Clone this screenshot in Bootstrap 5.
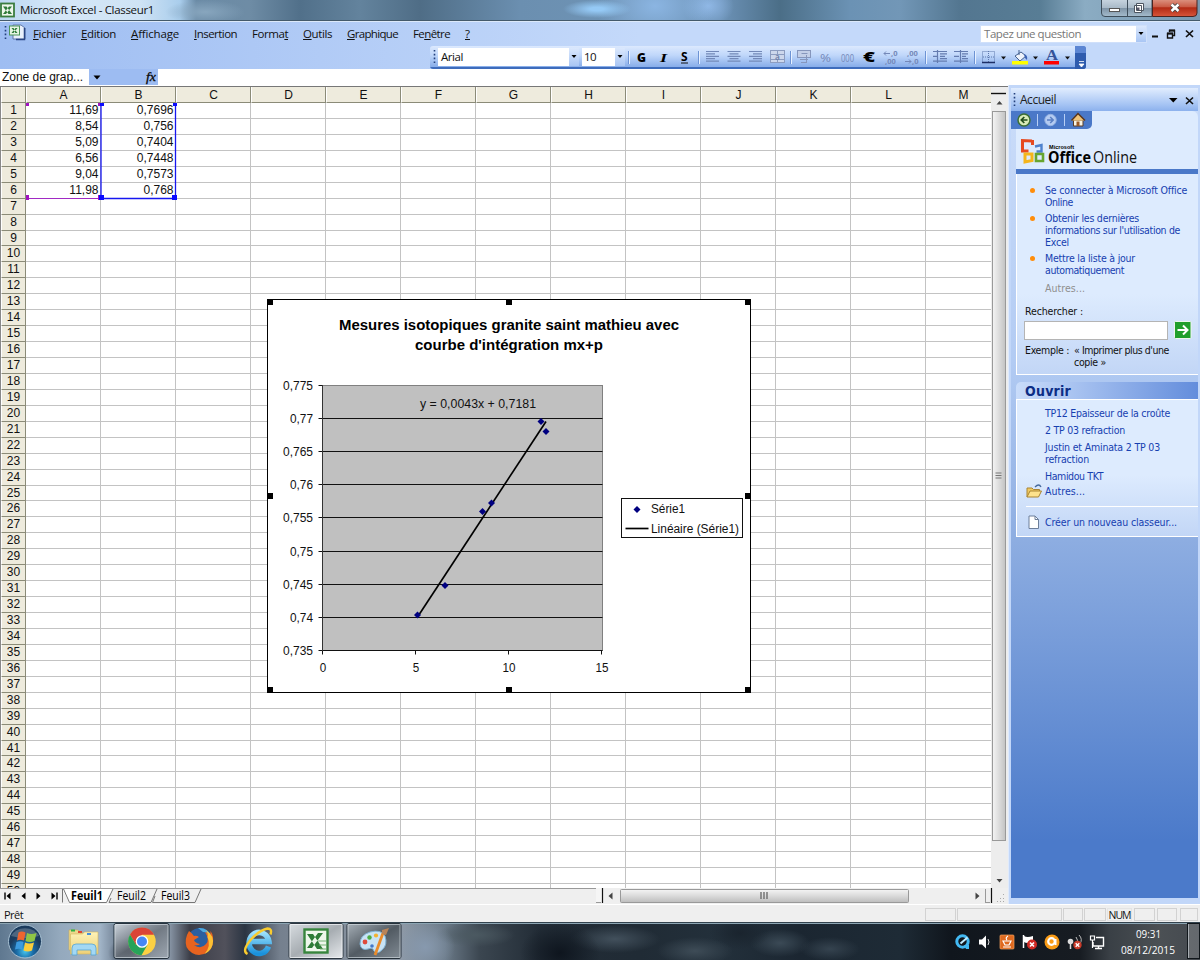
<!DOCTYPE html>
<html lang="fr">
<head>
<meta charset="utf-8">
<title>Microsoft Excel - Classeur1</title>
<link href="https://cdn.jsdelivr.net/npm/bootstrap@5.3.0/dist/css/bootstrap.min.css" rel="stylesheet">
<style>
body{width:1200px;height:960px;overflow:hidden;background:#efefef;color:#111;font:11.5px/14px "Open Sans","Noto Sans",sans-serif}
svg{display:block;flex:none}
svg text{white-space:pre}
.titlebar{height:21px;background:
 radial-gradient(ellipse 34px 9px at 597px 9px,#95c9f5 20%,transparent),
 radial-gradient(ellipse 60px 40px at 655px 6px,#8bb5e2,transparent),
 radial-gradient(ellipse 40px 12px at 205px 12px,#88a6be,transparent),
 radial-gradient(ellipse 26px 20px at 708px 6px,#90b8e6,transparent),
 linear-gradient(90deg,#bcd8f1 0,#d5e7f7 60px,#cfe3f5 140px,#a9cdec 180px,#6b8ba6 196px,#6e8ca5 250px,#51708a 300px,#63839d 360px,#4f6d86 420px,#6b8fb0 520px,#6f94b6 640px,#6d93b8 720px,#4b6e87 780px,#6b92b4 850px,#7297b7 900px,#537690 960px,#587d95 1040px,#8bacc3 1085px,#7898b0 1200px);
 border-bottom:1px solid #445a6b}
.menubar{height:25px;border-top:1px solid #dce9fa;background:linear-gradient(90deg,#9ebdf2,#c4d9fa 640px)}
.menubar u{text-underline-offset:1px}
.menubar .mi{margin-right:15px}
.menubar>span{position:static;padding-bottom:1px}
.ask{width:167px;height:18px;border:1px solid #d0e0fa;color:#777;margin-right:5px}
.dropcell{width:10px;background:linear-gradient(#dbe8fd,#a9c6f4)}
.toolrow{height:23px;background:linear-gradient(90deg,#9ebdf2,#c4d9fa 640px)}
.toolbox{width:656px;margin-left:430px;border-radius:3px;background:linear-gradient(#dce9fe,#c0d7fa 40%,#86ace9 92%,#3e6cbc 93%)}
.combo{height:18px;margin-top:2px}
.formula{height:16px;background:#9dbcf2;font:12px/16px "Liberation Sans",sans-serif}
.namebox{width:89px}
.bookarea{width:1008px;padding-top:1px;background:#fff}
.work{height:802px;border-top:1px solid #777}
.sheet{width:991px;border-left:1px solid #888;font:12px/15px "Liberation Sans",sans-serif}
.hrow{height:16px;line-height:17px}
.drow{height:15.946px}
.rh{width:25px;flex:none;text-align:center;background:#eeebdd;border-right:1px solid #8b8b78;border-bottom:1px solid #8b8b78;border-left:1px solid #fff}
.ch{width:75px;flex:none;text-align:center;background:#eeebdd;border-right:1px solid #8b8b78;border-bottom:1px solid #8b8b78;border-left:1px solid #fff}
.cell{width:75px;flex:none;text-align:right;padding-right:1.5px;border-right:1px solid #c3c3c3;border-bottom:1px solid #c3c3c3}
.range{left:25px;top:15px}
.chart{left:266px;top:212px;font-family:"Liberation Sans",sans-serif}
.pane{width:192px;height:819px;background:#c2d7f9;padding:3px 2px 6px 2px;font:10.5px/12px "DejaVu Sans Condensed","DejaVu Sans",sans-serif;color:#1640b0;border-left:1px solid #dfeafc}
.panehead{height:23px;background:linear-gradient(#e1edfe,#a7c5f4 70%,#8cb1ed);color:#222}
.panebody{height:787px;background:linear-gradient(#cadcf9,#b2cbf3 250px,#8dade1 430px,#4b7aca 730px)}
.navtab{width:81px;height:18px;background:#4a78c8;border-radius:0 0 5px 0}
.navrow{height:18px;background:#ddebfe;border-radius:0 6px 0 0}
.office{height:40px;margin-left:5px;background:#ddebfe}
.bluebar{height:5px;margin-left:5px;background:#4a78c8}
.card1{height:201px;margin-left:5px;background:linear-gradient(#ddebfe 60%,#c2d6f6);border-left:1px solid #fff;border-bottom:1px solid #fff;padding:10px 0 0 7px}
.bul{display:flex}
.bul::before{content:"";width:5px;height:5px;border-radius:50%;background:#ff8d0a;margin:4px 10px 0 6px;flex:none}
.search{width:144px;height:19px;background:#fff;border:1px solid #b4b4b4}
.openhead{height:17px;margin:7px 0 0 5px;border-radius:5px 0 0 0;background:linear-gradient(90deg,#c9dcfa,#638ddc);color:#0c2d85;font:bold 14px/18px "DejaVu Sans Condensed",sans-serif;padding-left:9px}
.card2{height:138px;margin-left:5px;background:linear-gradient(#ddebfe 55%,#c2d6f6);border:solid #fff;border-width:1px 0 1px 1px;padding:7px 0 0 9px}
.card2 .ln{padding-left:19px;margin-bottom:5px}
.newfile{margin-top:7px;height:30px;border-top:1px solid #fff}
.status{height:18px;border-top:1px solid #fff;padding-top:3px}
.pcell{height:13px;border:1px solid #d2d2d2;line-height:12px;font-size:10.5px;text-align:center;flex:none;margin-left:1px}
.taskbar{height:38px;border-top:1px solid #33434e;box-shadow:inset 0 1px #8ca5b3;background:
 radial-gradient(ellipse 30px 26px at 425px 24px,#8799ae,transparent),
 radial-gradient(ellipse 40px 12px at 475px 12px,#4b5961,transparent),
 radial-gradient(ellipse 40px 30px at 560px 30px,#0e151e,transparent),
 radial-gradient(ellipse 45px 14px at 615px 16px,#42505c,transparent),
 radial-gradient(ellipse 38px 14px at 695px 28px,#3e4c57,transparent),
 radial-gradient(ellipse 30px 16px at 740px 10px,#1a242e,transparent),
 radial-gradient(ellipse 30px 14px at 780px 20px,#3b4a56,transparent),
 radial-gradient(ellipse 30px 12px at 830px 26px,#35434f,transparent),
 radial-gradient(ellipse 22px 16px at 130px 30px,#2d3846,transparent),
 linear-gradient(90deg,#5f7890,#94a9bd 60px,#a1b4c7 100px,#6f7f92 118px,#8693a3 170px,#3b3d47 190px,#51515b 225px,#2b3543 245px,#75808e 280px,#8f9aa7 400px,#6b7a88 445px,#3b4650 480px,#222c36 540px,#202b35 640px,#23303b 720px,#1b2631 800px,#1e2b36 900px,#10161d 950px,#171c22 1080px,#3a4046 1110px,#4b5054 1160px,#454a50)}
</style>
</head>
<body>
<header>
 <div class="titlebar d-flex justify-content-between">
  <div class="d-flex align-items-center">
   <svg width="20" height="20" viewBox="0 0 20 20"><rect x="1" y="3.500" width="13" height="13" fill="#eef7ec" stroke="#3b7d3f" stroke-width="1.800"/><path d="M3 6.500h3.500l5.500 7.500H8.500zM12 6.500H9L3 14h3z" fill="#2f7b38"/></svg>
   <span data-w="134">Microsoft Excel - Classeur1</span>
  </div>
  <svg width="100" height="19" viewBox="1100 0 100 19">
   <defs><linearGradient id="gb" x2="0" y2="1"><stop offset="0" stop-color="#c9d6e1"/><stop offset=".5" stop-color="#a9bac8"/><stop offset=".52" stop-color="#7e93a5"/><stop offset="1" stop-color="#a5bccd"/></linearGradient>
   <linearGradient id="gr" x2="0" y2="1"><stop offset="0" stop-color="#dd9684"/><stop offset=".45" stop-color="#ca5b45"/><stop offset=".5" stop-color="#b22a14"/><stop offset="1" stop-color="#d8563a"/></linearGradient></defs>
   <path d="M1101.500-1V13q0 3.500 3.500 3.500H1152V-1z" fill="url(#gb)" stroke="#3d4d5a"/><path d="M1152.500-1V16.500H1193q4 0 4-3.500V-1z" fill="url(#gr)" stroke="#4b2420"/><path d="M1127.500 0V16" stroke="#3d4d5a"/>
   <rect x="1109.500" y="8.500" width="10" height="3" fill="#fff" stroke="#555"/><path d="M1136.500 3.500h7v7h-7z M1134.500 5.500h7v7h-7z" fill="#fff" stroke="#4c5560"/><rect x="1137" y="7.500" width="2.500" height="2.500" fill="#556"/>
   <path d="M1171.500 4.500l7 6.500m0-6.500l-7 6.500" stroke="#444" stroke-width="4.200"/><path d="M1171.500 4.500l7 6.500m0-6.500l-7 6.500" stroke="#fff" stroke-width="2.400"/>
  </svg>
 </div>
 <nav class="menubar d-flex align-items-center">
  <svg width="33" height="24" viewBox="0 22 33 24"><path d="M5.500 26v14" stroke="#24417c" stroke-width="1.600" stroke-dasharray="1.600 2.200"/><path d="M13 25h8l4 3v11H13z" fill="#e9f0fc" stroke="#5e77a8"/><path d="M16 39.500h8.500V28" fill="none" stroke="#2a4685" stroke-width="1.500"/><rect x="9.500" y="26" width="10" height="9" fill="#e6f5e4" stroke="#4f965a"/><path d="M11.500 28h2l4 5h-2zM17.500 28h-2l-4 5h2z" fill="#2d7b38"/></svg>
  <span class="mi" data-w="33"><u>F</u>ichier</span><span class="mi" data-w="35"><u>E</u>dition</span><span class="mi" data-w="48"><u>A</u>ffichage</span><span class="mi" data-w="43"><u>I</u>nsertion</span><span class="mi" data-w="36">Forma<u>t</u></span><span class="mi" data-w="29"><u>O</u>utils</span><span class="mi" data-w="51"><u>G</u>raphique</span><span class="mi" data-w="37">Fe<u>n</u>être</span><span><u>?</u></span>
  <div class="ask d-flex bg-white ms-auto"><span class="flex-grow-1" style="line-height:15px;padding-left:3px"><span data-w="97">Tapez une question</span></span><div class="dropcell d-flex align-items-center justify-content-center"><svg width="6" height="4"><path d="M.5 0h5L3 3z"/></svg></div></div>
  <svg width="48" height="24" viewBox="1152 21 48 24"><path d="M1152 35.500h6" stroke="#111" stroke-width="2"/><path d="M1169.500 31v-1.500h5v5H1173M1167.500 32.500h5v4.500h-5z" fill="none" stroke="#111" stroke-width="1.400"/><path d="M1167 32.500h6M1169 29.500h6" stroke="#111" stroke-width="2"/><path d="M1186 29.500l7 6.500m0-6.500l-7 6.500" stroke="#111" stroke-width="1.700"/></svg>
 </nav>
 <div class="toolrow d-flex">
  <div class="toolbox d-flex">
   <svg width="8" height="23" viewBox="430 46 8 23"><path d="M434.500 50v14" stroke="#24417c" stroke-width="1.600" stroke-dasharray="1.600 2.200"/></svg>
   <div class="combo d-flex bg-white" style="width:141px"><span class="flex-grow-1" style="line-height:17px;padding-left:3px"><span data-w="22">Arial</span></span><div class="dropcell d-flex align-items-center justify-content-center"><svg width="6" height="4"><path d="M.5 0h5L3 3z"/></svg></div></div>
   <div class="combo d-flex bg-white" style="width:43px;margin-left:3px"><span class="flex-grow-1" style="line-height:17px;padding-left:2px"><span data-w="12">10</span></span><div class="dropcell d-flex align-items-center justify-content-center"><svg width="6" height="4"><path d="M.5 0h5L3 3z"/></svg></div></div>
   <svg width="461" height="23" viewBox="625 46 461 23" font-family="Open Sans">
    <path d="M628.500 51v13M698.500 51v13M790.500 51v13M925.500 51v13M974.500 51v13" stroke="#6d93d4"/><path d="M629.500 51v13M699.500 51v13M791.500 51v13M926.500 51v13M975.500 51v13" stroke="#e8f1ff"/>
    <text x="637" y="61.500" font-size="12" font-weight="800" textLength="9" lengthAdjust="spacingAndGlyphs">G</text>
    <text x="660" y="61.500" font-size="13" font-weight="700" font-style="italic" font-family="Liberation Serif" textLength="7" lengthAdjust="spacingAndGlyphs">I</text>
    <text x="681" y="61" font-size="12" font-weight="700">S</text><path d="M681 63h7" stroke="#111"/>
    <g stroke="#7389b8" stroke-width="1.200"><path d="M706 51.500h13M706 53.900h9M706 56.300h13M706 58.700h9M706 61.100h13"/><path d="M727.500 51.500h13M729.500 53.900h9M727.500 56.300h13M729.500 58.700h9M727.500 61.100h13M749 51.500h13M753 53.900h9M749 56.300h13M753 58.700h9M749 61.100h13"/></g>
    <g fill="#cdd7ec" stroke="#8c9cc0"><rect x="770.500" y="50.500" width="14" height="12"/><path d="M770.500 54.500h14M770.500 59.500h14M777.500 50.500v4M777.500 59.500v3" fill="none"/></g><text x="775" y="60" font-size="8" font-weight="700" fill="#7485ad">a</text>
    <g fill="#c3cfe8" stroke="#8696bc"><rect x="797.500" y="50.500" width="13" height="7"/><path d="M800 59.500h8M801 62.500h6M801.500 53.500h6M806.500 55v8" fill="none"/></g>
    <g fill="#7488b8"><text x="820" y="61.500" font-size="11" textLength="11" lengthAdjust="spacingAndGlyphs">%</text><text x="841" y="61.500" font-size="10.500" textLength="13" lengthAdjust="spacingAndGlyphs">000</text>
    <g font-size="7.500" font-weight="700"><text x="891" y="56">,0</text><text x="885" y="64">,00</text><text x="907" y="56">,00</text><text x="912" y="64">,0</text></g><path d="M884 53.500h6m-4-2l-2 2 2 2M905 61.500h6m-2-2l2 2-2 2" fill="none" stroke="#7488b8"/></g>
    <text x="863" y="62" font-size="14" font-weight="800" textLength="12" lengthAdjust="spacingAndGlyphs">€</text>
    <g stroke="#647cb0" stroke-width="1.200"><path d="M933 51.500h14M940 53.900h7M940 56.300h5M940 58.700h7M933 61.100h14M933 56.300h5M937.500 50v13M954 51.500h14M962 53.900h6M962 56.300h4M962 58.700h6M954 61.100h14M954 56.300h5M960.500 50v13"/></g>
    <path d="M982.500 51.500h12v11h-12zM988.500 51v11M983 57h12" fill="none" stroke="#5d78ad" stroke-dasharray="1 1"/><path d="M982 62.500h13" stroke="#1d2f66" stroke-width="1.500"/>
    <path d="M1001 56.500h5l-2.500 3zM1033 56.500h5l-2.500 3zM1065 56.500h5l-2.500 3z" fill="#111"/>
    <path d="M1015 56l6-4 5 4-6 5z" fill="#eef3fb" stroke="#44608f"/><path d="M1019 55v-5" stroke="#44608f"/><path d="M1024 54q4 1 3 6l-2-2z" fill="#3a62b5"/><rect x="1012" y="61" width="16" height="3.500" fill="#ff0"/>
    <text x="1046" y="60" font-size="14" font-family="Liberation Serif" font-weight="700" fill="#35549a" textLength="12" lengthAdjust="spacingAndGlyphs">A</text><rect x="1044" y="61" width="15" height="3.500" fill="#f00"/>
    <path d="M1075 46h8q3 0 3 3v17q0 3-3 3h-8z" fill="#2f5cae"/><path d="M1075 46h8q3 0 3 3v4h-11z" fill="#6f99e3" opacity=".7"/><path d="M1079 61.500h5M1079 64h5l-2.500 3z" stroke="#fff" fill="#fff" stroke-width=".8"/>
   </svg>
  </div>
 </div>
 <div class="formula d-flex">
  <div class="namebox bg-white"><span style="padding-left:2px"><span data-w="81">Zone de grap...</span></span></div>
  <svg width="69" height="16" viewBox="89 69 69 16"><path d="M93.500 75.500h7l-3.500 4z"/><text x="146" y="81" font-family="Liberation Serif" font-style="italic" font-size="13" stroke="#111" stroke-width=".3" textLength="10" lengthAdjust="spacingAndGlyphs">fx</text></svg>
  <div class="bg-white flex-grow-1"></div>
 </div>
</header>

<main class="d-flex" style="height:819px">
 <div class="bookarea flex-shrink-0">
  <div class="work d-flex bg-white overflow-hidden">
   <div class="sheet position-relative overflow-hidden flex-shrink-0">
    <div id="grid"></div>
    <svg class="range position-absolute" width="155" height="98" viewBox="26 102 155 98"><path d="M27 198.500h73" stroke="#a12ac4" fill="none"/><path d="M101 103v95.500h74.500V103" fill="none" stroke="#1616f0" stroke-width="1.300"/><path d="M26 103h3v3h-3zM98 103h3v3h-3zM26 195h3v5h-3zM98 195h3v5h-3z" fill="#a012c0"/><path d="M100 103h4v3h-4zM173 103h4v3h-4zM99 195h5v5h-5zM172 195h5v5h-5z" fill="#0a0aff"/></svg>
    <svg class="chart position-absolute" width="484" height="394" viewBox="267 299 484 394" id="chart"></svg>
   </div>
   <svg width="17" height="801" viewBox="991 87 17 801"><defs><linearGradient id="sv"><stop offset="0" stop-color="#f4f4f4"/><stop offset=".5" stop-color="#dcdcdc"/><stop offset="1" stop-color="#c2c2c2"/></linearGradient><linearGradient id="sh" x2="0" y2="1"><stop offset="0" stop-color="#f4f4f4"/><stop offset=".5" stop-color="#dadada"/><stop offset="1" stop-color="#bcbcbc"/></linearGradient></defs><rect x="991" y="86" width="17" height="803" fill="#ededed"/><path d="M991 93.500h15" stroke="#111" stroke-width="1.400"/><path d="M996.500 104.500l3-3.500 3 3.500zM996.500 879h6l-3 3.500z" fill="#444"/><rect x="992.500" y="111.500" width="13" height="729" fill="url(#sv)" stroke="#999"/><path d="M995.500 473h6M995.500 475.500h6M995.500 478h6" stroke="#777"/></svg>
  </div>
  <svg width="1008" height="16" viewBox="0 888 1008 16" font-family="Open Sans" font-size="12">
   <path d="M0 888h1008v16H0z" fill="#efefef"/><path d="M0 888.500h596" stroke="#999"/>
   <path d="M5 892.500v7M57 892.500v7" stroke="#111" stroke-width="1.500"/><path d="M10.500 892.500v7l-4-3.500zM25.500 892.500v7l-4-3.500zM36.500 892.500v7l4-3.500zM51.500 892.500v7l4-3.500z"/>
   <path d="M62 889l7 13.500h38l6-13.500z" fill="#fff"/><path d="M62.500 889v13.500M63.500 889l6 13.500h37l6.500-13.500M111 898l-2 4.500h42l6-13.500M155 896l-2.500 6.500H195l6-13.500" fill="none" stroke="#777"/>
   <text x="71" y="900" font-weight="700" textLength="32" lengthAdjust="spacingAndGlyphs">Feuil1</text><text x="117" y="900" textLength="29" lengthAdjust="spacingAndGlyphs">Feuil2</text><text x="161" y="900" textLength="29" lengthAdjust="spacingAndGlyphs">Feuil3</text>
   <path d="M596 888h6v14h-6z" fill="#f5f5f5"/><path d="M602.500 888v15M991.500 888v15" stroke="#111" stroke-width="1.200"/><path d="M596 902.500h5M985 902.500h5M985.500 889v13" stroke="#999"/>
   <path d="M612.500 892.500v7l-4-3.500zM975.500 892.500v7l4-3.500z" fill="#444"/><rect x="620.500" y="889.500" width="288" height="13" rx="1" fill="url(#sh)" stroke="#999"/><path d="M761 892v7M764 892v7M767 892v7" stroke="#666" stroke-width="1.300"/>
   <path d="M1003 894h1v1h-1zM1000 898h1v1h-1zM1003 898h1v1h-1zM997 901h1v1h-1zM1000 901h1v1h-1zM1003 901h1v1h-1z" fill="#aaa"/>
  </svg>
 </div>
 <aside class="pane">
  <div class="panehead d-flex align-items-center">
   <svg width="9" height="23" viewBox="1011 88 9 23"><path d="M1014.500 93v13" stroke="#24417c" stroke-width="1.600" stroke-dasharray="1.600 2.200"/></svg>
   <span data-w="36" style="font:12px/22px 'Open Sans',sans-serif">Accueil</span>
   <svg class="ms-auto" width="34" height="23" viewBox="1164 88 34 23"><path d="M1169 98h8.500l-4.200 4.500z"/><path d="M1186 97.500l7 6.500m0-6.500l-7 6.500" stroke="#111" stroke-width="1.600"/></svg>
  </div>
  <div class="panebody">
   <div class="navrow"><div class="navtab"><svg width="81" height="18" viewBox="1011 111 81 18"><circle cx="1024" cy="120" r="6" fill="#d9ecb9" stroke="#3d6f35" stroke-width="1.500"/><path d="M1027.500 120h-6m2.800-3l-3 3 3 3" fill="none" stroke="#234d1d" stroke-width="1.700"/><path d="M1037.500 114v12M1064.500 114v12" stroke="#b8cff5"/><circle cx="1050.500" cy="120" r="5.700" fill="#b4cbf1" stroke="#96b3e4"/><path d="M1047 120h6m-2.800-3l3 3-3 3" fill="none" stroke="#5a7fc3" stroke-width="1.500"/><path d="M1073.500 120h9.500v6h-9.500z" fill="#f9f4e5" stroke="#5a3d26"/><path d="M1071.500 120.500l6.500-7 7 7" fill="#f1c376" stroke="#5a351c" stroke-width="1.500"/><path d="M1076.500 121.500h3v4.500h-3z" fill="#9a5a28"/></svg></div></div>
   <div class="office"><svg width="182" height="40" viewBox="1016 129 182 40">
    <g fill="none" stroke-width="3"><path d="M1032 141l-9.500-.5v10.500h6M1032.500 140v5" stroke="#e64a20"/><path d="M1035 146.500l6.500-1.500v6.500h-5" stroke="#4e82ce" stroke-width="2.400"/><path d="M1032 154h-7v8l7-1.500z" stroke="#f5b51b"/><path d="M1036 154h7v7h-7z" stroke="#67a52f" stroke-width="2.600"/></g>
    <text x="1049" y="148.500" font-size="6" font-weight="700" font-family="Liberation Sans" textLength="25" lengthAdjust="spacingAndGlyphs">Microsoft</text><text x="1048" y="163" font-size="16.500" font-weight="700" font-family="Open Sans" textLength="43" lengthAdjust="spacingAndGlyphs" fill="#000">Office</text><text x="1093" y="163" font-size="16.500" font-family="Open Sans" textLength="44" lengthAdjust="spacingAndGlyphs" fill="#111">Online</text></svg></div>
   <div class="bluebar"></div>
   <div class="card1">
    <div class="bul mb-1"><div><span data-w="142">Se connecter à Microsoft Office</span><br><span data-w="28">Online</span></div></div>
    <div class="bul mb-1"><div><span data-w="94">Obtenir les dernières</span><br><span data-w="135">informations sur l'utilisation de</span><br><span data-w="24">Excel</span></div></div>
    <div class="bul"><div><span data-w="90">Mettre la liste à jour</span><br><span data-w="79">automatiquement</span></div></div>
    <div style="padding:6px 0 0 21px;color:#8f8f8f"><span data-w="40">Autres...</span></div>
    <div style="padding:11px 0 4px 1px;color:#111"><span data-w="58">Rechercher :</span></div>
    <div class="d-flex"><div class="search"></div><svg style="margin-left:6px" width="18" height="18"><rect x=".5" y=".5" width="16.500" height="17" rx="1" fill="#209f2c" stroke="#eef6ee"/><path d="M3.500 9h9.500M9 4.500l4.500 4.500-4.500 4.500" fill="none" stroke="#fff" stroke-width="2"/></svg></div>
    <div class="d-flex" style="padding:4px 0 0 1px;color:#111"><div style="width:49px"><span data-w="44">Exemple :</span></div><div><span data-w="95">« Imprimer plus d'une</span><br><span data-w="32">copie »</span></div></div>
   </div>
   <div class="openhead"><span data-w="46">Ouvrir</span></div>
   <div class="card2">
    <div class="ln"><span data-w="125">TP12 Epaisseur de la croûte</span></div>
    <div class="ln"><span data-w="80">2 TP 03 refraction</span></div>
    <div class="ln"><span data-w="115">Justin et Aminata 2 TP 03</span><br><span data-w="44">refraction</span></div>
    <div class="ln mb-0"><span data-w="58">Hamidou TKT</span></div>
    <div class="d-flex align-items-center" style="height:17px"><svg width="19" height="16" viewBox="1025 483 19 16"><path d="M1026 497v-9h5l1.500 1.500h6V492" fill="#f0ca63" stroke="#a98432"/><path d="M1026 497l3-6h11.500l-3 6z" fill="#fde28c" stroke="#a98432"/><path d="M1034 487q4-4 6 0" fill="none" stroke="#456a9d" stroke-width="1.300"/></svg><span data-w="40">Autres...</span></div>
    <div class="newfile d-flex align-items-center"><svg width="19" height="16" viewBox="1025 514 19 16"><path d="M1028 516h6l3.500 3.500v9H1028z" fill="#fff" stroke="#6d7f9a"/><path d="M1034 516v3.500h3.500" fill="none" stroke="#6d7f9a"/></svg><span data-w="132">Créer un nouveau classeur...</span></div>
   </div>
  </div>
 </aside>
</main>

<div class="status d-flex"><span style="width:924px;padding-left:4px;line-height:14px;font-size:11px"><span data-w="19">Prêt</span></span><div class="pcell" style="width:31px"></div><div class="pcell" style="width:105px"></div><div class="pcell" style="width:20px"></div><div class="pcell" style="width:22px"></div><div class="pcell" style="width:25px;border-color:#e4e4e4"><span data-w="22">NUM</span></div><div class="pcell" style="width:21px;margin-left:2px"></div><div class="pcell" style="width:20px;margin-left:2px"></div><div class="pcell" style="width:18px;margin-left:3px"></div></div>

<footer class="taskbar d-flex">
 <svg width="402" height="37" viewBox="0 923 402 37">
  <defs>
   <radialGradient id="orb" cy=".8"><stop offset="0" stop-color="#45c4ee"/><stop offset=".5" stop-color="#1a6ba6"/><stop offset="1" stop-color="#1b3b5d"/></radialGradient>
   <linearGradient id="bt" x2="1" y2="1"><stop offset="0" stop-color="#dfe6ec" stop-opacity=".85"/><stop offset=".5" stop-color="#6b7178" stop-opacity=".7"/><stop offset="1" stop-color="#a8b0b8" stop-opacity=".7"/></linearGradient>
   <linearGradient id="bt2" x2="1" y2="1"><stop offset="0" stop-color="#d8dde1"/><stop offset=".5" stop-color="#a7adb2"/><stop offset="1" stop-color="#e7eaed"/></linearGradient>
   <linearGradient id="bt3" x2="1" y2="1"><stop offset="0" stop-color="#a7b0b8"/><stop offset=".5" stop-color="#525b63"/><stop offset="1" stop-color="#818b94"/></linearGradient>
   <linearGradient id="fo" x2="0" y2="1"><stop offset="0" stop-color="#fdf3b8"/><stop offset="1" stop-color="#eed077"/></linearGradient>
   <linearGradient id="ie" x2="0" y2="1"><stop offset="0" stop-color="#9fe1fc"/><stop offset="1" stop-color="#1a92dc"/></linearGradient>
  </defs>
  <circle cx="25" cy="941.500" r="16.500" fill="url(#orb)" stroke="#a8c1d3"/><path d="M11 936a16 15 0 0 1 28 0q-14 4-28 0z" fill="#fff" opacity=".22"/>
  <path d="M18.500 932.500q3-2 7 0l-1.500 8q-4-1.500-7 0z" fill="#ee6630"/><path d="M27 933q4 2 9.500 0l-2 8q-5 2-9 0z" fill="#8fc545"/><path d="M16.500 942q4-1.500 7 0l-1.500 7.500q-3-1.500-7 0z" fill="#3c9be0"/><path d="M25 942.500q4 2 9 0l-2 8q-4 2-8.500 0z" fill="#fbcd3b"/>
  <path d="M69 930h9l2 3h17v17H69z" fill="#edd88c" stroke="#c9ad55" stroke-width=".6"/><path d="M70.500 934h12l2-2h13.500v22H70.500z" fill="url(#fo)" stroke="#d3b760" stroke-width=".6"/><path d="M71 929.500h4v2h-4z" fill="#30b344"/><path d="M78 931h4v2h-4z" fill="#e04830"/><path d="M87 933h4v2h-4z" fill="#4590dc"/><path d="M72 955v-7q0-4 4-4h16q4 0 4 4v7h-5v-5H77v5z" fill="#a3d8f4" stroke="#56a4d2" stroke-width=".8"/>
  <rect x="114" y="923.500" width="55" height="35" rx="2" fill="url(#bt)" stroke="#25323d"/><rect x="115" y="924.500" width="53" height="33" rx="1" fill="none" stroke="#dde6ec" opacity=".6"/>
  <circle cx="142" cy="941.500" r="13.700" fill="#fbd043"/><path d="M142 934.700h12a13.700 13.700 0 0 0-24-.3l6 10.500z" fill="#db4437"/><path d="M130 934.500a13.700 13.700 0 0 0 11.500 20.700l6-10.400-11.500 0z" fill="#27a35a"/><circle cx="142" cy="941.500" r="6.300" fill="#fff"/><circle cx="142" cy="941.500" r="5" fill="#4687f4"/>
  <circle cx="200" cy="941" r="13" fill="#2a5f9f"/><path d="M198 928q10-1 13 9-3-5-8-5z" fill="#4eaae0"/><path d="M189 931q-5 8-2.500 16a14 14 0 0 0 26-2q2-9-2-14 0 4-.5 5-3-4-5-4 5 8 1 12-5 6-12 1 4 1 6-1-5-1-6-4l5-3q-3-2-5-1-2-3-5-5z" fill="#e7631f"/><path d="M206 930q9 6 6.500 15a14 14 0 0 1-8 9q7-8 3-17 1-3-1.500-7z" fill="#fcc033"/>
  <path d="M268.500 946.500A10 10.500 0 1 1 269 941.500H251" fill="none" stroke="url(#ie)" stroke-width="5.500"/><path d="M247.500 954q-6-3 3-14 9-10 17-11.500 5 0 3 6" fill="none" stroke="#f9cc2f" stroke-width="2.400"/>
  <rect x="289" y="923.500" width="54" height="35" rx="2" fill="url(#bt2)" stroke="#2c3740"/><rect x="290" y="924.500" width="52" height="33" fill="none" stroke="#f5f7f9" opacity=".7"/>
  <rect x="304.500" y="929.500" width="23" height="23" fill="#eef7eb" stroke="#37853d" stroke-width="2.400"/><path d="M307 934h6l10 15h-6zM323 933h-5l-11 15h5z" fill="#2e7c37"/><path d="M318 941h8M319 945h7M320 949h6" stroke="#76b377"/>
  <rect x="347" y="923.500" width="54" height="35" rx="2" fill="url(#bt3)" stroke="#26313a"/><rect x="348" y="924.500" width="52" height="33" fill="none" stroke="#dbe2e8" opacity=".6"/>
  <path d="M360 944q0-9 10-12 11-3 15 4 3 9-3 14-5 5-8 1-1-4-6-2-7 2-8-5z" fill="#c8e3f5" stroke="#7eb0d1"/><circle cx="365" cy="942" r="2.400" fill="#df4a3a"/><circle cx="369.500" cy="937.500" r="2.200" fill="#4cad44"/><circle cx="376" cy="935.500" r="2.100" fill="#f2b332"/><circle cx="372" cy="946" r="1.800" fill="#4478c9"/><path d="M375 955l8-22" stroke="#ea8c2b" stroke-width="2.800"/><path d="M382 934l0-4 7-2-3 7z" fill="#b98458"/>
 </svg>
 <div class="flex-grow-1"></div>
 <svg width="260" height="37" viewBox="940 923 260 37" font-family="Open Sans" font-size="11.500" fill="#fff">
  <circle cx="962.500" cy="941.500" r="5.700" fill="none" stroke="#42b9f3" stroke-width="3"/><path d="M960.500 943.500l7-6" stroke="#c0ecff" stroke-width="2"/><path d="M964 945h5v4h-3z" fill="#42b9f3"/>
  <path d="M979 939.500h3l4-4v13l-4-4h-3z"/><path d="M988 939q2 3 0 6" fill="none" stroke="#ddd"/>
  <rect x="1000" y="935" width="14" height="14" rx="1" fill="#df6a20" stroke="#f4a25c" stroke-width=".7"/><path d="M1003 941h8l-2 4h-4zM1003 947h8M1007 940q-2-2 1-4" fill="none" stroke="#fff" stroke-width="1.200"/>
  <path d="M1023.500 935v13" stroke="#fff" stroke-width="1.500"/><path d="M1024 936q3 2 9 0v6q-6 2-9 0z"/><circle cx="1032" cy="944.500" r="5" fill="#d02a24"/><path d="M1030 942.500l4 4m0-4l-4 4" stroke="#fff" stroke-width="1.600"/>
  <circle cx="1052" cy="942" r="7.500" fill="#f99c16"/><circle cx="1051.500" cy="941.500" r="3.300" fill="none" stroke="#fff" stroke-width="2.200"/><path d="M1055.500 939v6" stroke="#fff" stroke-width="2"/>
  <circle cx="1070.500" cy="941.500" r="2.800" fill="#ddd"/><path d="M1070.500 942v7" stroke="#ddd" stroke-width="1.500"/><path d="M1076 937q3 3 0 7M1079 935q4 4 1 9" stroke="#bbb" fill="none"/><circle cx="1077.500" cy="945" r="4.200" fill="#c83a29"/><path d="M1075.700 943.200l3.600 3.600m0-3.600l-3.600 3.600" stroke="#fff" stroke-width="1.300"/>
  <path d="M1096 937.500h7.500v8.500H1093v-4M1095 948.500h7M1098.500 946v3" fill="none" stroke="#fff" stroke-width="1.400"/><path d="M1090.500 936h4v4h-4zM1092.500 940v8" fill="none" stroke="#fff" stroke-width="1.200"/>
  <text x="1136" y="938" textLength="25" lengthAdjust="spacingAndGlyphs">09:31</text><text x="1121" y="954" textLength="54" lengthAdjust="spacingAndGlyphs">08/12/2015</text>
  <rect x="1187.500" y="923.500" width="12" height="35" fill="#fff" fill-opacity=".17" stroke="#11171c"/><path d="M1188.500 924v34" stroke="#a7adb2"/>
 </svg>
</footer>
<script>
// Sheet contents
const values=[["11,69","0,7696"],["8,54","0,756"],["5,09","0,7404"],["6,56","0,7448"],["9,04","0,7573"],["11,98","0,768"]];
let h='<div class="d-flex hrow"><div class="rh"></div>'+[..."ABCDEFGHIJKLM"].map(c=>`<div class="ch">${c}</div>`).join('')+'</div>';
for(let r=1;r<=50;r++){
  h+=`<div class="d-flex drow"><div class="rh">${r}</div>`;
  for(let c=0;c<13;c++)h+=`<div class="cell">${(values[r-1]||[])[c]||''}</div>`;
  h+='</div>';
}
document.getElementById('grid').innerHTML=h;

// Scatter chart with trend line
const X=v=>323+v*18.6;
const t=(x,y,s,w,a='')=>`<text x="${x}" y="${y}" textLength="${w}" lengthAdjust="spacingAndGlyphs" ${a}>${s}</text>`;
let g='<rect x="267.5" y="299.500" width="483" height="393" fill="#fff" stroke="#000"/><rect x="322.500" y="385.500" width="280" height="265" fill="#c0c0c0" stroke="#808080"/><g font-size="12" fill="#111">';
[["0,775",30],["0,77",23],["0,765",30],["0,76",23],["0,755",30],["0,75",23],["0,745",30],["0,74",23],["0,735",30]].forEach(([s,w],i)=>{
  const y=Math.round(385+i*33.1)+.5;
  g+=t(313-w,y+4,s,w)+`<path d="M318.500 ${y}h${i?284:4}" stroke="#111"/>`;
});
[0,5,10,15].forEach(v=>{const x=Math.round(X(v))-.5,w=v>9?13:6.500;g+=`<path d="M${x} 650v4.500" stroke="#111"/>`+t(x-w/2+.5,672,v,w)});
g+='<path d="M322.500 385v266" stroke="#333"/>';
g+=t(420,408,'y = 0,0043x + 0,7181',116)+'</g><g font-size="14.500" font-weight="700">'+t(339,330,'Mesures isotopiques granite saint mathieu avec',340)+t(415,350,"courbe d'intégration mx+p",188)+'</g>';
g+='<path d="M418.500 615.500L546 421.500" stroke="#000" stroke-width="1.700"/>';
[[417.5,615],[445,585.5],[482.500,511.500],[491.500,503],[541,421.500],[546,431.500]].forEach(([x,y])=>{g+=`<path d="M${x-3.5} ${y}l3.500-3.500 3.500 3.500-3.500 3.500z" fill="#000080"/>`});
g+='<rect x="621.500" y="498.500" width="121" height="39" fill="#fff" stroke="#111"/><path d="M633.500 509.500l3.500-3.500 3.500 3.500-3.500 3.500z" fill="#000080"/><path d="M625.500 528.500h23" stroke="#000" stroke-width="1.700"/><g font-size="12" fill="#111">'+t(651,513,'Série1',34)+t(651,532.5,'Linéaire (Série1)',88)+'</g>';
for(const x of [267,506,745])for(const y of [299,493,687])if(x!=506||y!=493)g+=`<rect x="${x}" y="${y}" width="6" height="6"/>`;
document.getElementById('chart').innerHTML=g;

// Even out label widths by tracking
document.querySelectorAll('[data-w]').forEach(e=>{
  const n=e.textContent.length,w=e.getBoundingClientRect().width;
  e.style.letterSpacing=((e.dataset.w-w)/n)+'px';
  e.style.whiteSpace='nowrap';
});
</script>
<script src="https://cdn.jsdelivr.net/npm/bootstrap@5.3.0/dist/js/bootstrap.bundle.min.js"></script>
</body>
</html>
